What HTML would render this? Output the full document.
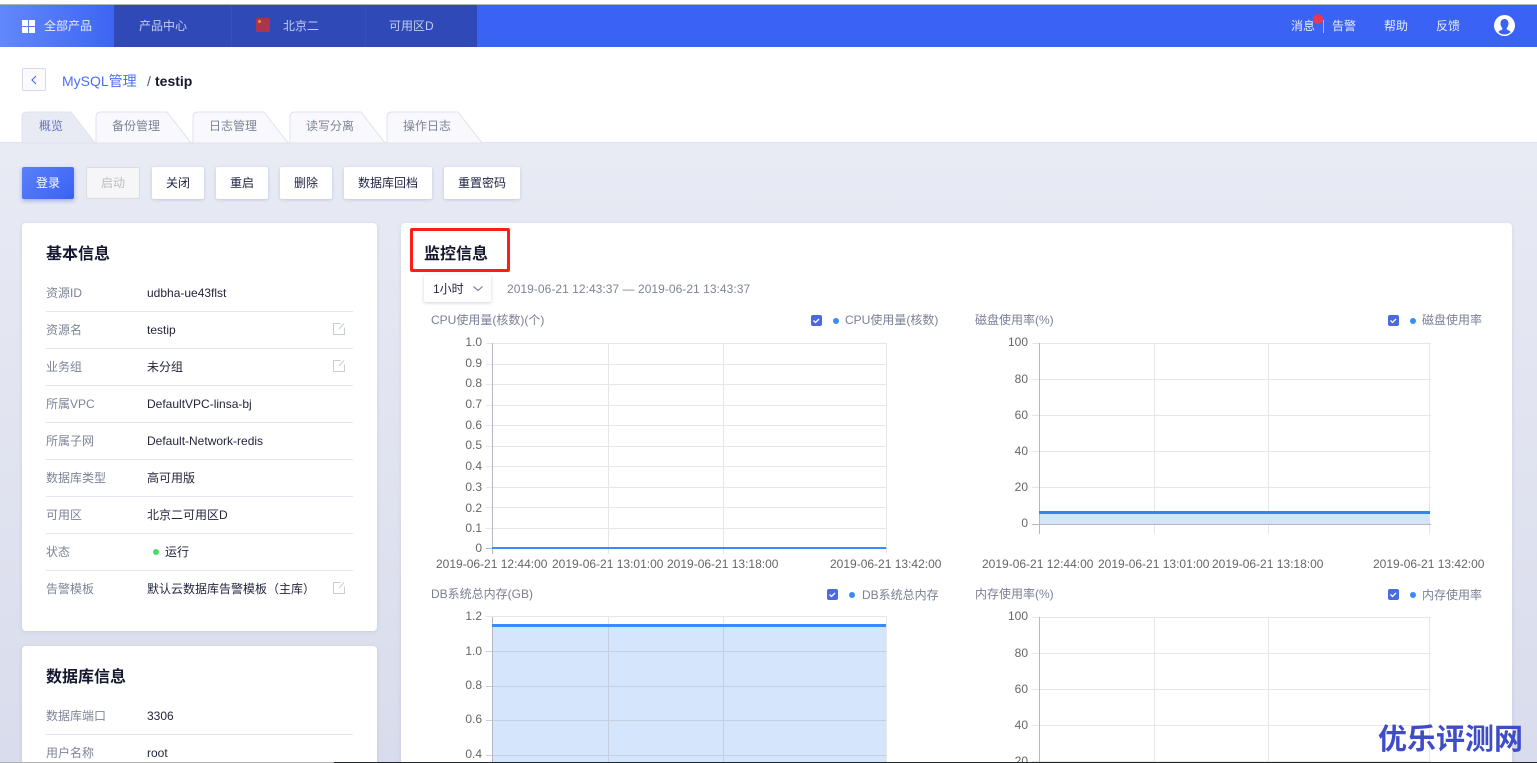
<!DOCTYPE html>
<html lang="zh"><head><meta charset="utf-8"><title>testip</title>
<style>
html,body{margin:0;padding:0;width:1537px;height:763px;overflow:hidden}
#w{position:absolute;left:0;top:0;width:1537px;height:763px;overflow:hidden;background:#fff;font-family:"Liberation Sans","Noto Sans CJK SC",sans-serif;font-size:12px;color:#1f2340}
.t{position:absolute;white-space:nowrap;line-height:20px;height:20px}
.b{position:absolute}
.nav{color:#c4cdf2}
.navw{color:#e6eafc}
.btn{position:absolute;top:167px;height:32px;line-height:32px;text-align:center;background:#fff;border-radius:2px;box-shadow:0 1px 3px rgba(90,100,170,.25);color:#1f2340}
.card{position:absolute;background:#fff;border-radius:4px;box-shadow:0 1px 4px rgba(110,120,180,.18)}
.h{font-size:16px;font-weight:bold;color:#15182e;margin-top:1px}
.k{color:#7d8497;left:46px;margin-top:1px}
.v{color:#23263c;left:147px;margin-top:1px}
.ln{position:absolute;left:46px;width:307px;height:1px;background:#e3e6f0}
.a{color:#666;font-size:12px}
.y{color:#666;font-size:12px;text-align:right;width:40px}
.ct{color:#7a8194}
.cb{position:absolute;width:11px;height:11px;background:#4a6ae0;border-radius:2px}
.dot{position:absolute;width:6px;height:6px;border-radius:50%;background:#3a8bf5}
</style></head><body><div id="w">
<div class="b" style="left:0;top:4px;width:1537px;height:1px;background:#b4b4b4"></div>
<div class="b" style="left:0;top:5px;width:1537px;height:42px;background:#3a62f4"></div>
<div class="b" style="left:0;top:5px;width:114px;height:42px;background:linear-gradient(90deg,#6288fb,#3d65f4)"></div>
<div class="b" style="left:114px;top:5px;width:363px;height:42px;background:#2f4ab6"></div>
<div class="b" style="left:231px;top:5px;width:1px;height:42px;background:#3050c4"></div>
<div class="b" style="left:365px;top:5px;width:1px;height:42px;background:#3050c4"></div>
<svg class="b" style="left:22px;top:20px" width="13" height="13"><rect width="6" height="6" fill="#fff"/><rect x="7" width="6" height="6" fill="#fff"/><rect y="7" width="6" height="6" fill="#fff"/><rect x="7" y="7" width="6" height="6" fill="#fff"/></svg>
<span class="t navw" style="left:44px;top:16px">全部产品</span>
<span class="t nav" style="left:139px;top:16px">产品中心</span>
<div class="b" style="left:256px;top:18px;width:14px;height:14px;border-radius:2px;background:#ab3550"></div>
<div class="b" style="left:258px;top:20px;width:3px;height:3px;background:#c9a23c;border-radius:50%"></div>
<span class="t nav" style="left:283px;top:16px">北京二</span>
<span class="t nav" style="left:389px;top:16px">可用区D</span>
<span class="t navw" style="left:1291px;top:16px">消息</span>
<div class="b" style="left:1313px;top:14px;width:10px;height:10px;border-radius:50%;background:#f0364a"></div>
<div class="b" style="left:1323px;top:20px;width:1px;height:13px;background:#a9b9f5"></div>
<span class="t navw" style="left:1332px;top:16px">告警</span>
<span class="t navw" style="left:1384px;top:16px">帮助</span>
<span class="t navw" style="left:1436px;top:16px">反馈</span>
<svg class="b" style="left:1494px;top:15px" width="21" height="21" viewBox="0 0 21 21"><circle cx="10.5" cy="10.5" r="10.5" fill="#fff"/><path d="M10.5 4c-2.6 0-4 2-4 4.500 0 2 .8 3.500 1.800 4.500v1.500c-1.500.6-3 1.200-4 2.500a9 9 0 0 0 12.400 0c-1-1.300-2.500-1.900-4-2.500V13c1-1 1.800-2.500 1.800-4.500C14.500 6 13.100 4 10.500 4z" fill="#3a62f4"/></svg>

<div class="b" style="left:22px;top:68px;width:24px;height:23px;box-sizing:border-box;border:1px solid #d5d8ee;border-radius:2px;background:#fbfbfe"></div>
<svg class="b" style="left:22px;top:68px" width="24" height="23"><path d="M14 8l-4 4 4 4" fill="none" stroke="#5a6cf0" stroke-width="1.200"/></svg>
<span class="t" style="left:62px;top:71px;font-size:14px;color:#4c6ef5">MySQL管理</span>
<span class="t" style="left:147px;top:71px;font-size:14px;color:#555a70">/</span>
<span class="t" style="left:155px;top:71px;font-size:14px;font-weight:bold;color:#15182e">testip</span>

<div class="b" style="left:0;top:142px;width:1537px;height:621px;background:linear-gradient(180deg,#e8eaf4,#d9dcec)"></div>
<div class="b" style="left:0;top:142px;width:1537px;height:1px;background:#dfe1f0"></div>
<svg class="b" style="left:0;top:105px" width="500" height="40">
<path d="M22 38V12q0-5 5-5h44l24 31z" fill="#e8eaf4" stroke="#e0e2f2"/>
<path d="M96 38V12q0-5 5-5h66l24 31z" fill="#f9f9fd" stroke="#dfe1f2"/>
<path d="M193 38V12q0-5 5-5h66l24 31z" fill="#f9f9fd" stroke="#dfe1f2"/>
<path d="M290 38V12q0-5 5-5h66l24 31z" fill="#f9f9fd" stroke="#dfe1f2"/>
<path d="M387 38V12q0-5 5-5h66l24 31z" fill="#f9f9fd" stroke="#dfe1f2"/>
</svg>
<span class="t" style="left:39px;top:116px;color:#6674b8">概览</span>
<span class="t" style="left:112px;top:116px;color:#7d8497">备份管理</span>
<span class="t" style="left:209px;top:116px;color:#7d8497">日志管理</span>
<span class="t" style="left:306px;top:116px;color:#7d8497">读写分离</span>
<span class="t" style="left:403px;top:116px;color:#7d8497">操作日志</span>

<div class="btn" style="left:22px;width:52px;background:linear-gradient(135deg,#5a80f8,#3a62f4);color:#fff;box-shadow:0 2px 4px rgba(60,90,200,.4)">登录</div>
<div class="btn" style="left:86px;width:52px;height:30px;line-height:30px;border:1px solid #dcdcdc;background:#f6f6f8;color:#bdbdbd;box-shadow:none">启动</div>
<div class="btn" style="left:152px;width:52px">关闭</div>
<div class="btn" style="left:216px;width:52px">重启</div>
<div class="btn" style="left:280px;width:52px">删除</div>
<div class="btn" style="left:344px;width:88px">数据库回档</div>
<div class="btn" style="left:444px;width:76px">重置密码</div>

<div class="card" style="left:22px;top:223px;width:355px;height:408px"></div>
<div class="card" style="left:22px;top:646px;width:355px;height:130px"></div>
<div class="card" style="left:401px;top:223px;width:1111px;height:553px"></div>

<span class="t h" style="left:46px;top:244px">基本信息</span>
<span class="t k" style="top:282px">资源ID</span><span class="t v" style="top:282px">udbha-ue43flst</span><div class="ln" style="top:311px"></div>
<span class="t k" style="top:319px">资源名</span><span class="t v" style="top:319px">testip</span><div class="ln" style="top:348px"></div>
<span class="t k" style="top:356px">业务组</span><span class="t v" style="top:356px">未分组</span><div class="ln" style="top:385px"></div>
<span class="t k" style="top:393px">所属VPC</span><span class="t v" style="top:393px">DefaultVPC-linsa-bj</span><div class="ln" style="top:422px"></div>
<span class="t k" style="top:430px">所属子网</span><span class="t v" style="top:430px">Default-Network-redis</span><div class="ln" style="top:459px"></div>
<span class="t k" style="top:467px">数据库类型</span><span class="t v" style="top:467px">高可用版</span><div class="ln" style="top:496px"></div>
<span class="t k" style="top:504px">可用区</span><span class="t v" style="top:504px">北京二可用区D</span><div class="ln" style="top:533px"></div>
<span class="t k" style="top:541px">状态</span><div class="b" style="left:153px;top:549px;width:6px;height:6px;border-radius:50%;background:#4cd964"></div><span class="t v" style="left:165px;top:541px">运行</span><div class="ln" style="top:570px"></div>
<span class="t k" style="top:578px">告警模板</span><span class="t v" style="top:578px">默认云数据库告警模板（主库）</span>
<svg class="b" style="left:333px;top:323px" width="12" height="12"><path d="M7.500.5H.5v11h11V4.500M6 6l5-5.500" fill="none" stroke="#c8ccd4"/></svg>
<svg class="b" style="left:333px;top:360px" width="12" height="12"><path d="M7.500.5H.5v11h11V4.500M6 6l5-5.500" fill="none" stroke="#c8ccd4"/></svg>
<svg class="b" style="left:333px;top:582px" width="12" height="12"><path d="M7.500.5H.5v11h11V4.500M6 6l5-5.500" fill="none" stroke="#c8ccd4"/></svg>

<span class="t h" style="left:46px;top:667px">数据库信息</span>
<span class="t k" style="top:705px">数据库端口</span><span class="t v" style="top:705px">3306</span><div class="ln" style="top:734px"></div>
<span class="t k" style="top:742px">用户名称</span><span class="t v" style="top:742px">root</span>

<div class="b" style="left:410px;top:228px;width:100px;height:44px;box-sizing:border-box;border:3px solid #fb1f17;border-radius:2px"></div>
<span class="t h" style="left:424px;top:244px">监控信息</span>
<div class="b" style="left:424px;top:275px;width:67px;height:27px;background:#fff;border-radius:2px;box-shadow:0 1px 3px rgba(90,100,170,.3)"></div>
<span class="t" style="left:433px;top:279px;color:#23263c">1小时</span>
<svg class="b" style="left:472px;top:285px" width="12" height="8"><path d="M1.500 1.500L6 5.500l4.500-4" fill="none" stroke="#666a80"/></svg>
<span class="t" style="left:507px;top:279px;color:#7d8497;letter-spacing:.04px">2019-06-21 12:43:37 — 2019-06-21 13:43:37</span>

<span class="t ct" style="left:431px;top:310px">CPU使用量(核数)(个)</span>
<div class="cb" style="left:811px;top:315px"></div><div class="dot" style="left:833px;top:318px"></div>
<span class="t ct" style="left:845px;top:310px">CPU使用量(核数)</span>
<span class="t ct" style="left:975px;top:310px">磁盘使用率(%)</span>
<div class="cb" style="left:1388px;top:315px"></div><div class="dot" style="left:1410px;top:318px"></div>
<span class="t ct" style="left:1422px;top:310px">磁盘使用率</span>
<span class="t ct" style="left:431px;top:584px">DB系统总内存(GB)</span>
<div class="cb" style="left:827px;top:589px"></div><div class="dot" style="left:849px;top:592px"></div>
<span class="t ct" style="left:862px;top:585px">DB系统总内存</span>
<span class="t ct" style="left:975px;top:584px">内存使用率(%)</span>
<div class="cb" style="left:1388px;top:589px"></div><div class="dot" style="left:1410px;top:592px"></div>
<span class="t ct" style="left:1422px;top:585px">内存使用率</span>

<svg class="b" style="left:0;top:0" width="1537" height="763" shape-rendering="crispEdges">
<g stroke="#e6e6ea" stroke-width="1">
<path d="M486 343.500H887M486 364.500H887M486 384.500H887M486 405.500H887M486 425.500H887M486 446.500H887M486 466.500H887M486 487.500H887M486 507.500H887M486 528.500H887"/>
<path d="M608.500 343V554M723.500 343V554M886.500 343V554"/>
<path d="M1032 343.500H1431M1032 379.500H1431M1032 415.500H1431M1032 451.500H1431M1032 487.500H1431"/>
<path d="M1154.500 343V534M1268.500 343V534M1429.500 343V534"/>
<path d="M486 616.500H887"/>
<path d="M608.500 617V763M723.500 617V763M886.500 617V763"/>
<path d="M1032 617.500H1431M1032 653.500H1431M1032 689.500H1431M1032 725.500H1431M1032 761.500H1431"/>
<path d="M1154.500 617V763M1268.500 617V763M1429.500 617V763"/>
</g>
<rect x="1039" y="514" width="391" height="10" fill="#d4e5fb"/>
<rect x="492" y="625" width="394" height="138" fill="#d5e5fb"/>
<g stroke="#c5cfdf" stroke-width="1"><path d="M486 651.500H886M486 686.500H886M486 720.500H886M486 755.500H886M608.500 625V763M723.500 625V763"/></g>
<g stroke="#b5b8c2" stroke-width="1">
<path d="M492.500 343V554M486 548.500H887M1039.500 343V534M1032 524.500H1431M492.500 617V763M1039.500 617V763"/>
</g>
<rect x="492" y="547" width="394" height="2" fill="#3a8bf5"/>
<rect x="1039" y="511" width="391" height="3" fill="#2f86f5"/>
<rect x="492" y="624" width="394" height="3" fill="#3a8bf5"/>
</svg>
<svg class="b" style="left:0;top:0" width="1537" height="763">
<g stroke="#fff" stroke-width="1.300" fill="none">
<path d="M813.500 320.500l2 2 3.500-3.500M1390.500 320.500l2 2 3.500-3.500M829.500 594.500l2 2 3.500-3.500M1390.500 594.500l2 2 3.500-3.500"/>
</g>
</svg>

<span class="t y" style="left:442px;top:332px">1.0</span>
<span class="t y" style="left:442px;top:353px">0.9</span>
<span class="t y" style="left:442px;top:373px">0.8</span>
<span class="t y" style="left:442px;top:394px">0.7</span>
<span class="t y" style="left:442px;top:415px">0.6</span>
<span class="t y" style="left:442px;top:435px">0.5</span>
<span class="t y" style="left:442px;top:456px">0.4</span>
<span class="t y" style="left:442px;top:477px">0.3</span>
<span class="t y" style="left:442px;top:498px">0.2</span>
<span class="t y" style="left:442px;top:518px">0.1</span>
<span class="t y" style="left:442px;top:538px">0</span>
<span class="t a" style="left:436px;top:554px">2019-06-21 12:44:00</span>
<span class="t a" style="left:552px;top:554px">2019-06-21 13:01:00</span>
<span class="t a" style="left:667px;top:554px">2019-06-21 13:18:00</span>
<span class="t a" style="left:830px;top:554px">2019-06-21 13:42:00</span>

<span class="t y" style="left:988px;top:332px">100</span>
<span class="t y" style="left:988px;top:369px">80</span>
<span class="t y" style="left:988px;top:405px">60</span>
<span class="t y" style="left:988px;top:441px">40</span>
<span class="t y" style="left:988px;top:477px">20</span>
<span class="t y" style="left:988px;top:513px">0</span>
<span class="t a" style="left:982px;top:554px">2019-06-21 12:44:00</span>
<span class="t a" style="left:1098px;top:554px">2019-06-21 13:01:00</span>
<span class="t a" style="left:1212px;top:554px">2019-06-21 13:18:00</span>
<span class="t a" style="left:1373px;top:554px">2019-06-21 13:42:00</span>

<span class="t y" style="left:442px;top:606px">1.2</span>
<span class="t y" style="left:442px;top:641px">1.0</span>
<span class="t y" style="left:442px;top:675px">0.8</span>
<span class="t y" style="left:442px;top:709px">0.6</span>
<span class="t y" style="left:442px;top:744px">0.4</span>

<span class="t y" style="left:988px;top:606px">100</span>
<span class="t y" style="left:988px;top:643px">80</span>
<span class="t y" style="left:988px;top:679px">60</span>
<span class="t y" style="left:988px;top:715px">40</span>
<span class="t y" style="left:988px;top:751px">20</span>

<span class="t" style="left:1378px;top:719px;height:36px;line-height:36px;font-size:29px;font-weight:bold;color:#3f4cc8;font-family:'Noto Sans CJK SC',sans-serif">优乐评测网</span>
<div class="b" style="left:0;top:762px;width:334px;height:1px;background:#b0b0b0"></div>
<div class="b" style="left:334px;top:762px;width:1203px;height:1px;background:#1c2a2e"></div>
</div></body></html>
